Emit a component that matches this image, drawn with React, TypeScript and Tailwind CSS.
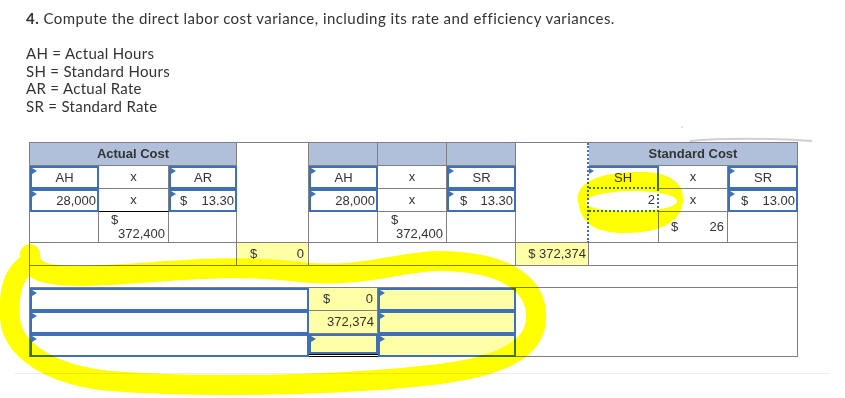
import React from 'react'

const blue = 'border-[#3f70b5]'

function Flag() {
  return (
    <span className="absolute left-0 top-0 h-0 w-0 border-y-[3px] border-y-transparent border-l-[5px] border-l-[#3f72b8]" />
  )
}

export default function App() {
  const cell = 'border-r border-b border-[#808080] text-[13px] text-[#333] flex items-center'
  const input = `relative border-2 ${blue} text-[13px] text-[#333] flex items-center`

  return (
    <div className="relative w-[845px] h-[398px] overflow-hidden bg-white font-['Liberation_Sans',Arial,sans-serif]">
      {/* Question */}
      <div className="pl-[26px] pt-[8px] font-['Lato',sans-serif] text-[15px] tracking-[0.45px] text-[#333]">
        <p className="leading-[20px]">
          <b className="font-bold">4.</b> Compute the direct labor cost variance, including its rate and efficiency variances.
        </p>
        <div className="mt-[17px] leading-[17.7px] tracking-[0.3px]">
          <p>AH = Actual Hours</p>
          <p>SH = Standard Hours</p>
          <p>AR = Actual Rate</p>
          <p>SR = Standard Rate</p>
        </div>
      </div>

      {/* Variance table */}
      <div className="ml-[29px] mt-[26px] grid w-[769px] grid-cols-[69px_70px_68px_72px_69px_69px_69px_73px_70px_69px_70px] grid-rows-[23px_23px_23px_31px_23px_22px_23px_23px_23px] border-l border-t border-[#808080]">
        {/* header */}
        <div className={`${cell} col-span-3 justify-center bg-[#b1c0da] font-bold text-[#222]`}>Actual Cost</div>
        <div className={`${cell} row-span-4 bg-white`} />
        <div className={`${cell} bg-[#b1c0da]`} />
        <div className={`${cell} bg-[#b1c0da]`} />
        <div className={`${cell} bg-[#b1c0da]`} />
        <div className="row-span-4 border-b border-[#808080] border-r-2 border-r-[#3f72b8] [border-right-style:dotted]" />
        <div className={`${cell} col-span-3 justify-center bg-[#b1c0da] font-bold text-[#222]`}>Standard Cost</div>

        {/* row 2 */}
        <div className={`${input} justify-center`}><Flag />AH</div>
        <div className={`${cell} justify-center`}>x</div>
        <div className={`${input} justify-center`}><Flag />AR</div>
        <div className={`${input} justify-center`}><Flag />AH</div>
        <div className={`${cell} justify-center`}>x</div>
        <div className={`${input} justify-center`}><Flag />SR</div>
        <div className={`${input} justify-center border-b-[#3f72b8] [border-bottom-style:dotted] border-l-0`}><Flag />SH</div>
        <div className={`${cell} justify-center`}>x</div>
        <div className={`${input} justify-center`}><Flag />SR</div>

        {/* row 3 */}
        <div className={`${input} justify-end pr-[1px]`}><Flag />28,000</div>
        <div className={`${cell} justify-center border-b-black`}>x</div>
        <div className={`${input} justify-between pl-[9px] pr-[1px]`}><Flag /><span>$</span><span>13.30</span></div>
        <div className={`${input} justify-end pr-[1px]`}><Flag />28,000</div>
        <div className={`${cell} justify-center`}>x</div>
        <div className={`${input} justify-between pl-[11px] pr-[1px]`}><Flag /><span>$</span><span>13.30</span></div>
        <div className="flex items-center justify-end border-b-2 border-r-2 border-[#3f72b8] border-dotted pr-[2px] text-[13px] text-[#333]">2</div>
        <div className={`${cell} justify-center`}>x</div>
        <div className={`${input} justify-between pl-[11px] pr-[1px]`}><Flag /><span>$</span><span>13.00</span></div>

        {/* row 4 */}
        <div className={cell} />
        <div className={`${cell} flex-col !items-stretch pl-[12px] pr-[3px] leading-[14px] pt-[1px]`}>
          <span>$</span>
          <span className="text-right">372,400</span>
        </div>
        <div className={cell} />
        <div className={cell} />
        <div className={`${cell} flex-col !items-stretch pl-[13px] pr-[3px] leading-[14px] pt-[1px]`}>
          <span>$</span>
          <span className="text-right">372,400</span>
        </div>
        <div className={cell} />
        <div className={`${cell} border-l-0`} />
        <div className={`${cell} justify-between pl-[12px] pr-[3px]`}><span>$</span><span>26</span></div>
        <div className={cell} />

        {/* row 5 */}
        <div className={`${cell} col-span-3`} />
        <div className={`${cell} justify-between bg-[#ffffa8] pl-[13px] pr-[4px]`}><span>$</span><span>0</span></div>
        <div className={`${cell} col-span-3`} />
        <div className={`${cell} justify-end bg-[#ffffa8] pr-[2px]`}>$ 372,374</div>
        <div className={`${cell} col-span-3`} />

        {/* row 6 */}
        <div className={`${cell} col-span-11`} />

        {/* rows 7-9 */}
        <div className={`${input} col-span-4 bg-white`}><Flag /></div>
        <div className={`${cell} justify-between bg-[#ffffa8] pl-[14px] pr-[4px]`}><span>$</span><span>0</span></div>
        <div className={`${input} col-span-2 bg-[#ffffa8]`}><Flag /></div>
        <div className={`${cell} col-span-4 row-span-3`} />

        <div className={`${input} col-span-4 bg-white`}><Flag /></div>
        <div className={`${cell} justify-end bg-[#ffffa8] pr-[3px]`}>372,374</div>
        <div className={`${input} col-span-2 bg-[#ffffa8]`}><Flag /></div>

        <div className={`${input} col-span-4 bg-white`}><Flag /></div>
        <div className="flex flex-col border-b-[3px] border-double border-black">
          <div className={`${input} flex-1 bg-[#ffffa8]`}><Flag /></div>
        </div>
        <div className={`${input} col-span-2 bg-[#ffffa8]`}><Flag /></div>
      </div>

      <div className="mx-[15px] mt-[16px] h-px bg-[#ececec]" />

      {/* highlighter marks */}
      <svg className="pointer-events-none absolute inset-0 mix-blend-multiply" width="845" height="398" viewBox="0 0 845 398">
        <path
          fillRule="evenodd"
          fill="#ffff00"
          d="M578 200 C576 178 610 172 640 172 C668 172 684 182 683 200 C682 222 660 233 625 233 C596 233 580 224 578 200 Z M586 202 C586 195 612 191 632 191 C656 191 677 195 677 201 C677 208 654 211 630 211 C607 211 586 209 586 202 Z"
        />
        <path
          fill="none"
          stroke="#ffff00"
          strokeWidth="20"
          strokeLinecap="round"
          strokeLinejoin="round"
          d="M30 254 C30 270 40 276 80 276 C150 275 220 262 300 272 C360 279 400 261 440 261 C515 262 538 290 536 320 C534 350 500 366 440 374 C340 386 200 388 110 381 C50 375 12 350 10 318 C8 290 15 272 28 264"
        />
        <path d="M690 141 C720 138 770 138 812 141" stroke="#cfcfcf" strokeWidth="2" fill="none" />
        <circle cx="682" cy="127" r="0.8" fill="#bbb" />
      </svg>
    </div>
  )
}
